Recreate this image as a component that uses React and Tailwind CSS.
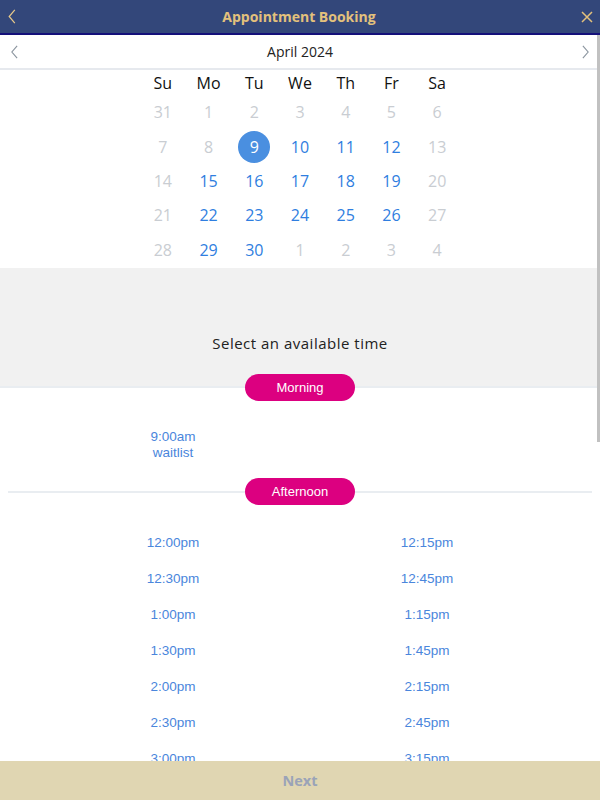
import React from "react";

const weeks = [
  [31, 1, 2, 3, 4, 5, 6],
  [7, 8, 9, 10, 11, 12, 13],
  [14, 15, 16, 17, 18, 19, 20],
  [21, 22, 23, 24, 25, 26, 27],
  [28, 29, 30, 1, 2, 3, 4],
];

const isOpen = (w, d, i) => {
  if (w === 0 || i === 0 || i === 6) return false;
  if (w === 1 && i === 1) return false;
  if (w === 4 && i > 2) return false;
  return true;
};

const afternoon = [
  ["12:00pm", "12:15pm"],
  ["12:30pm", "12:45pm"],
  ["1:00pm", "1:15pm"],
  ["1:30pm", "1:45pm"],
  ["2:00pm", "2:15pm"],
  ["2:30pm", "2:45pm"],
  ["3:00pm", "3:15pm"],
];

const Chevron = ({ dir = "left", className }) => (
  <svg viewBox="0 0 10 16" className={className} fill="none" stroke="currentColor" strokeWidth="1.3">
    {dir === "left" ? <path d="M8 1 L2 8 L8 15" /> : <path d="M2 1 L8 8 L2 15" />}
  </svg>
);

const Pill = ({ children }) => (
  <div className="w-[110px] h-[27px] rounded-full bg-[#dc0080] text-white text-[13px] flex items-center justify-center font-['Liberation_Sans',sans-serif]">
    {children}
  </div>
);

const App = () => {
  return (
    <div className="h-[800px] w-[600px] flex flex-col bg-white font-['Open_Sans',sans-serif] overflow-hidden">
      <div className="h-[35px] shrink-0 bg-[#33477a] border-b-2 border-[#14107a] flex items-center justify-between px-[7px]">
        <Chevron className="w-[10px] h-[15px] text-[#e7c98a]" />
        <div className="text-[#e3c17c] font-bold text-[14px]">Appointment Booking</div>
        <svg viewBox="0 0 12 12" className="w-[12px] h-[12px] text-[#e3c17c]" stroke="currentColor" strokeWidth="1.5">
          <path d="M1 1 L11 11 M11 1 L1 11" />
        </svg>
      </div>

      <div className="relative flex-1 overflow-hidden">
        <div className="absolute right-0 top-0 w-[3px] h-[407px] bg-[#c1c1c1]" />

        <div className="h-[35px] flex items-center justify-between px-[10px] border-b-2 border-[#e6e9ee]">
          <Chevron className="w-[9px] h-[14px] text-[#8a949e]" />
          <div className="text-[14px] text-[#222]">April 2024</div>
          <Chevron dir="right" className="w-[9px] h-[14px] text-[#8a949e]" />
        </div>

        <div className="w-[320px] mx-auto grid grid-cols-7">
          {["Su", "Mo", "Tu", "We", "Th", "Fr", "Sa"].map((d) => (
            <div key={d} className="h-[25px] flex items-center justify-center text-[16px] text-[#111]">
              {d}
            </div>
          ))}
          {weeks.map((row, w) =>
            row.map((d, i) => {
              const sel = w === 1 && d === 9;
              return (
                <div key={`${w}-${i}`} className="h-[34.4px] flex items-center justify-center">
                  {sel ? (
                    <div className="w-[32px] h-[32px] rounded-full bg-[#4a8fe0] text-white flex items-center justify-center text-[16px]">
                      9
                    </div>
                  ) : (
                    <span className={`text-[16px] ${isOpen(w, d, i) ? "text-[#2f7ee0]" : "text-[#c9cdd2]"}`}>{d}</span>
                  )}
                </div>
              );
            })
          )}
        </div>

        <div className="mt-[1px] h-[120px] bg-[#f1f1f1] border-b-2 border-[#e9edf1] flex flex-col items-center justify-end">
          <div className="text-[15px] tracking-[0.5px] text-[#222] mb-[31px]">Select an available time</div>
        </div>
        <div className="flex justify-center -mt-[14px]">
          <Pill>Morning</Pill>
        </div>

        <div className="w-[508px] mx-auto grid grid-cols-2 mt-[28px] font-['Liberation_Sans',sans-serif] text-[13.5px] text-[#4a86dc]">
          <div className="flex flex-col items-center leading-[16px]">
            <span>9:00am</span>
            <span>waitlist</span>
          </div>
        </div>

        <div className="relative mx-[8px] mt-[18px] h-[26px] flex items-center justify-center">
          <div className="absolute left-0 right-0 top-[12px] h-[2px] bg-[#e9edf1]" />
          <div className="relative">
            <Pill>Afternoon</Pill>
          </div>
        </div>

        <div className="w-[508px] mx-auto grid grid-cols-2 mt-[28px] font-['Liberation_Sans',sans-serif] text-[13.5px] text-[#4a86dc]">
          {afternoon.map(([a, b]) => (
            <React.Fragment key={a}>
              <div className="h-[36px] flex justify-center">{a}</div>
              <div className="h-[36px] flex justify-center">{b}</div>
            </React.Fragment>
          ))}
        </div>
      </div>

      <div className="h-[39px] shrink-0 bg-[#e0d6b2] flex items-center justify-center">
        <span className="text-[14.5px] font-bold text-[#9aa3b8]">Next</span>
      </div>
    </div>
  );
};

export default App;
